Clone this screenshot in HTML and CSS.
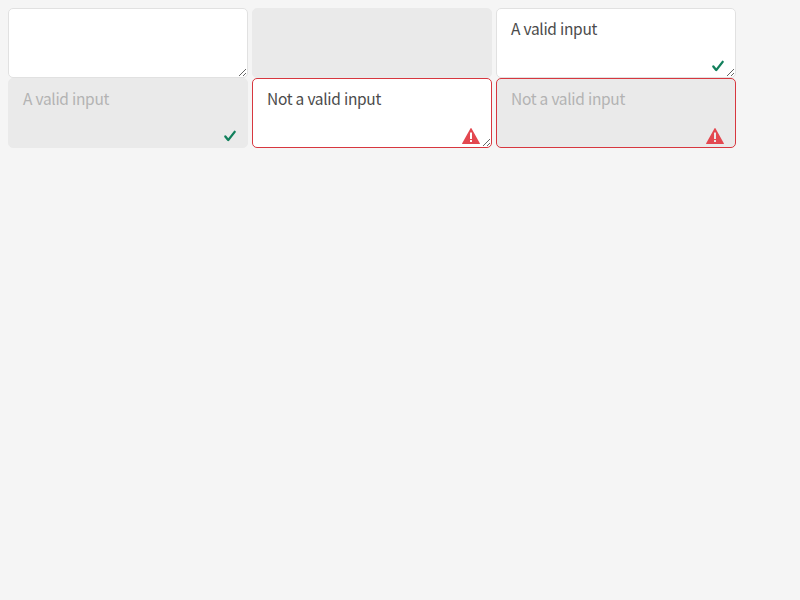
FILE: index.html
```html
<!DOCTYPE html>
<html lang="en">
<head>
<meta charset="utf-8">
<title>Text areas</title>
<link rel="stylesheet" href="styles.css">
</head>
<body>
<svg class="sprite" aria-hidden="true">
<symbol id="check" viewBox="0 0.4 12 12"><path d="M4.5 10a1.022 1.022 0 0 1-.799-.384l-2.488-3a1 1 0 0 1 1.576-1.233L4.5 7.376l4.712-5.991a1 1 0 1 1 1.576 1.23l-5.51 7A.978.978 0 0 1 4.5 10z"/></symbol>
<symbol id="alert" viewBox="0 0 18 18"><path d="M8.564 1.289L.2 16.256A.5.5 0 0 0 .636 17h16.728a.5.5 0 0 0 .436-.744L9.436 1.289a.5.5 0 0 0-.872 0zM10 14.75a.25.25 0 0 1-.25.25h-1.5a.25.25 0 0 1-.25-.25v-1.5a.25.25 0 0 1 .25-.25h1.5a.25.25 0 0 1 .25.25zm0-3a.25.25 0 0 1-.25.25h-1.5a.25.25 0 0 1-.25-.25v-6a.25.25 0 0 1 .25-.25h1.5a.25.25 0 0 1 .25.25z"/></symbol>
</svg>
<main class="fields">
<div class="field"><textarea class="input"></textarea></div>
<div class="field"><textarea class="input" disabled></textarea></div>
<div class="field"><textarea class="input">A valid input</textarea><svg class="icon valid"><use href="#check"/></svg></div>
<div class="field"><textarea class="input" disabled>A valid input</textarea><svg class="icon valid"><use href="#check"/></svg></div>
<div class="field"><textarea class="input is-invalid">Not a valid input</textarea><svg class="icon invalid"><use href="#alert"/></svg></div>
<div class="field"><textarea class="input is-invalid" disabled>Not a valid input</textarea><svg class="icon invalid"><use href="#alert"/></svg></div>
</main>
</body>
</html>
```
FILE: styles.css
```css
body {
  margin: 8px;
  background: #f5f5f5;
}
.sprite {
  display: none;
}
.fields {
  display: grid;
  grid-template-columns: repeat(3, 240px);
  grid-auto-rows: 70px;
  column-gap: 4px;
}
.field {
  position: relative;
}
.input {
  box-sizing: border-box;
  display: block;
  width: 240px;
  height: 70px;
  margin: 0;
  padding: 7px 14px;
  border: 1px solid #e1e1e1;
  border-radius: 5px;
  background: #fff;
  color: #4b4b4b;
  font: 15.5px/25px "Noto Sans CJK JP", sans-serif;
  letter-spacing: -0.33px;
  word-spacing: 0.3px;
  outline: none;
  overflow: auto;
  resize: both;
}
.input:disabled {
  background: #eaeaea;
  border-color: #eaeaea;
  color: #b3b3b3;
  resize: none;
}
.input.is-invalid {
  border-color: #d7373f;
}
.icon {
  position: absolute;
  right: 12px;
  pointer-events: none;
}
.valid {
  width: 14px;
  height: 14px;
  right: 11px;
  bottom: 4px;
  fill: #12805c;
}
.invalid {
  width: 18px;
  height: 18px;
  bottom: 3px;
  fill: #e34850;
}
```
